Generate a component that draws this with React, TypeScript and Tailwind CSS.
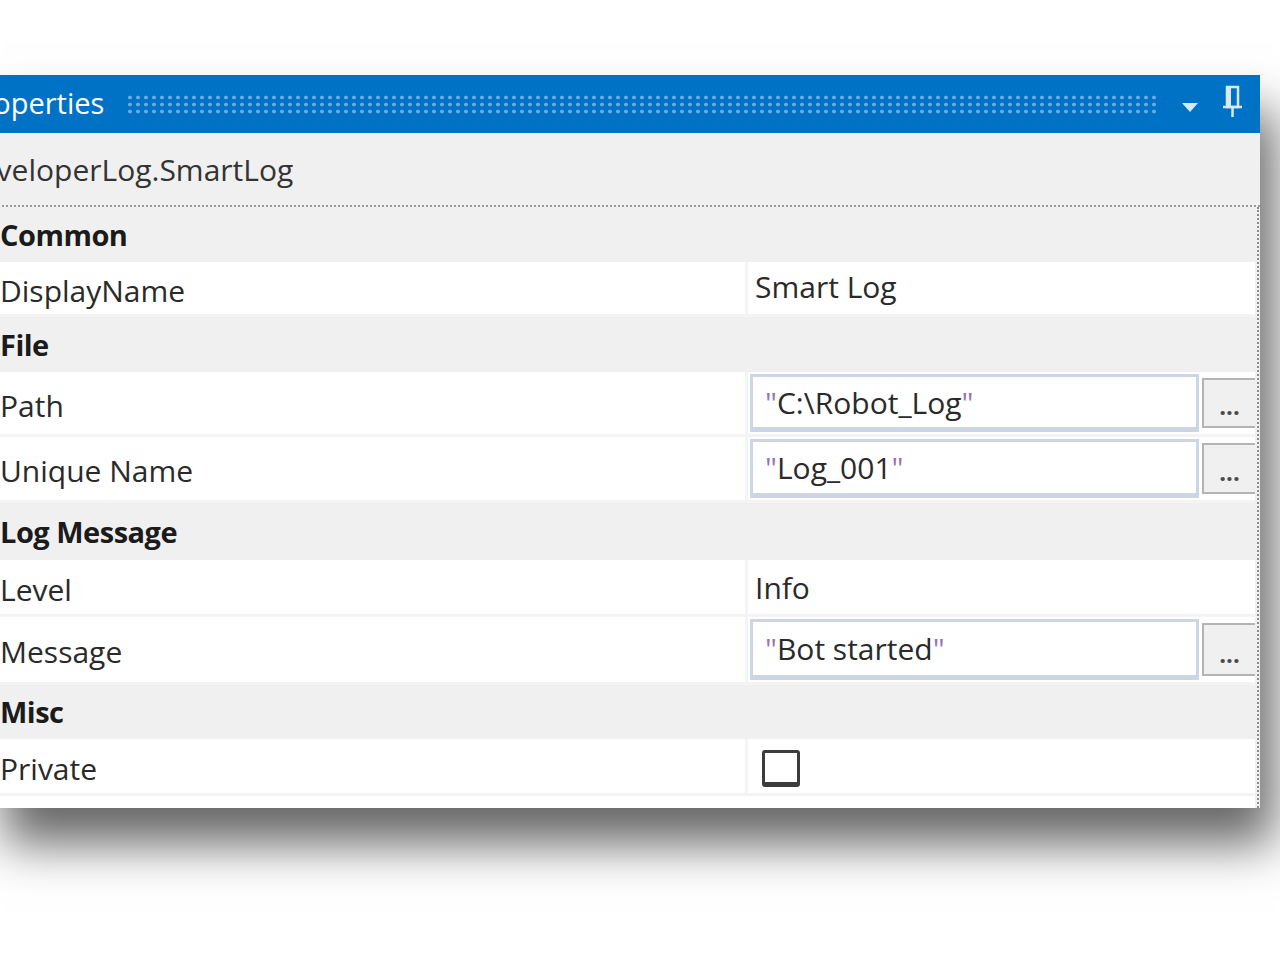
import React from 'react';

const font = { fontFamily: '"Open Sans", "Noto Sans", "Liberation Sans", sans-serif' };

function Category({ label, height }: { label: string; height: string }) {
  return (
    <div className={`${height} flex items-center pl-[10px] text-[29px] font-bold text-[#1b1b1b] tracking-[-0.5px]`}>
      {label}
    </div>
  );
}

function Quoted({ text }: { text: string }) {
  return (
    <span>
      <span className="text-[#9a72b8]">"</span>
      {text}
      <span className="text-[#9a72b8]">"</span>
    </span>
  );
}

function Row({ label, height, children }: { label: string; height: string; children?: React.ReactNode }) {
  return (
    <div className={`flex bg-white border-b-[3px] border-[#f4f4f4] ${height}`}>
      <div className="w-[758px] shrink-0 flex items-center pl-[10px] pt-[4px] text-[30px] text-[#2a2a2a] border-r-[3px] border-[#f4f4f4]">
        {label}
      </div>
      <div className="flex-1 flex items-center">{children}</div>
    </div>
  );
}

function ExprBox({ text }: { text: string }) {
  return (
    <div className="flex-1 flex items-stretch h-full py-[2px] pl-[2px]">
      <div className="flex-1 flex items-center bg-white border-[3px] border-b-[5px] border-[#cdd4e4] pl-[12px] text-[30px] text-[#2a2a2a]">
        <Quoted text={text} />
      </div>
      <div className="w-[53px] ml-[3px] my-[4px] bg-[#f0f0f0] border-2 border-r-0 border-[#b4b4b4] flex items-end justify-center pb-[8px]">
        <span className="text-[24px] font-bold leading-none text-[#4a4a4a]">...</span>
      </div>
    </div>
  );
}

export default function App() {
  return (
    <div className="min-h-screen w-full bg-white overflow-hidden" style={font}>
      <div className="pt-[75px]">
        <div className="ml-[-10px] w-[1270px] bg-[#f0f0f0] shadow-[14px_36px_46px_rgba(0,0,0,0.6)]">
          {/* title bar */}
          <div className="h-[58px] bg-[#0072c6] flex items-center">
            <span className="ml-[-26px] text-[29px] text-white leading-none pb-[4px]">
              Properties
            </span>
            <div className="ml-[22px] w-[1034px] h-[20px] bg-[radial-gradient(circle,#6aaae3_1.6px,transparent_2.2px)] bg-[length:8px_7px]" />
            <div className="ml-[22px] mt-[6px] w-0 h-0 border-l-[8px] border-r-[8px] border-t-[9px] border-l-transparent border-r-transparent border-t-[#d9e8f7]" />
            <svg className="ml-[24px] mb-[6px]" width="22" height="34" viewBox="0 0 22 34" fill="none">
              <rect x="5" y="3" width="11" height="20" stroke="#d9e8f7" strokeWidth="2.5" />
              <rect x="5" y="3" width="4" height="20" fill="#d9e8f7" />
              <line x1="1" y1="23" x2="20" y2="23" stroke="#d9e8f7" strokeWidth="2.5" />
              <line x1="10.5" y1="23" x2="10.5" y2="33" stroke="#d9e8f7" strokeWidth="2.5" />
            </svg>
          </div>

          {/* selected object */}
          <div className="h-[74px] flex items-center border-b-2 border-dotted border-[#9a9a9a]">
            <span className="ml-[-32px] text-[30px] text-[#333]">DeveloperLog.SmartLog</span>
          </div>

          {/* grid */}
          <div className="flex">
            <div className="flex-1 mr-[2px]">
              <Category label="Common" height="h-[55px]" />
              <Row label="DisplayName" height="h-[55px]">
                <span className="pl-[7px] text-[30px] text-[#2a2a2a] pb-[4px]">Smart Log</span>
              </Row>
              <Category label="File" height="h-[55px]" />
              <Row label="Path" height="h-[65px]">
                <ExprBox text="C:\Robot_Log" />
              </Row>
              <Row label="Unique Name" height="h-[66px]">
                <ExprBox text="Log_001" />
              </Row>
              <Category label="Log Message" height="h-[57px]" />
              <Row label="Level" height="h-[57px]">
                <span className="pl-[7px] text-[30px] text-[#2a2a2a]">Info</span>
              </Row>
              <Row label="Message" height="h-[68px]">
                <ExprBox text="Bot started" />
              </Row>
              <Category label="Misc" height="h-[54px]" />
              <Row label="Private" height="h-[57px]">
                <div className="ml-[14px] mt-[4px] w-[38px] h-[37px] bg-white border-[3px] border-b-[5px] border-[#3c3c3c] rounded-[3px]" />
              </Row>
              <div className="h-[12px] bg-white" />
            </div>
            <div className="w-[3px] border-l-2 border-dotted border-[#8a8a8a]" />
          </div>
        </div>
      </div>
    </div>
  );
}
